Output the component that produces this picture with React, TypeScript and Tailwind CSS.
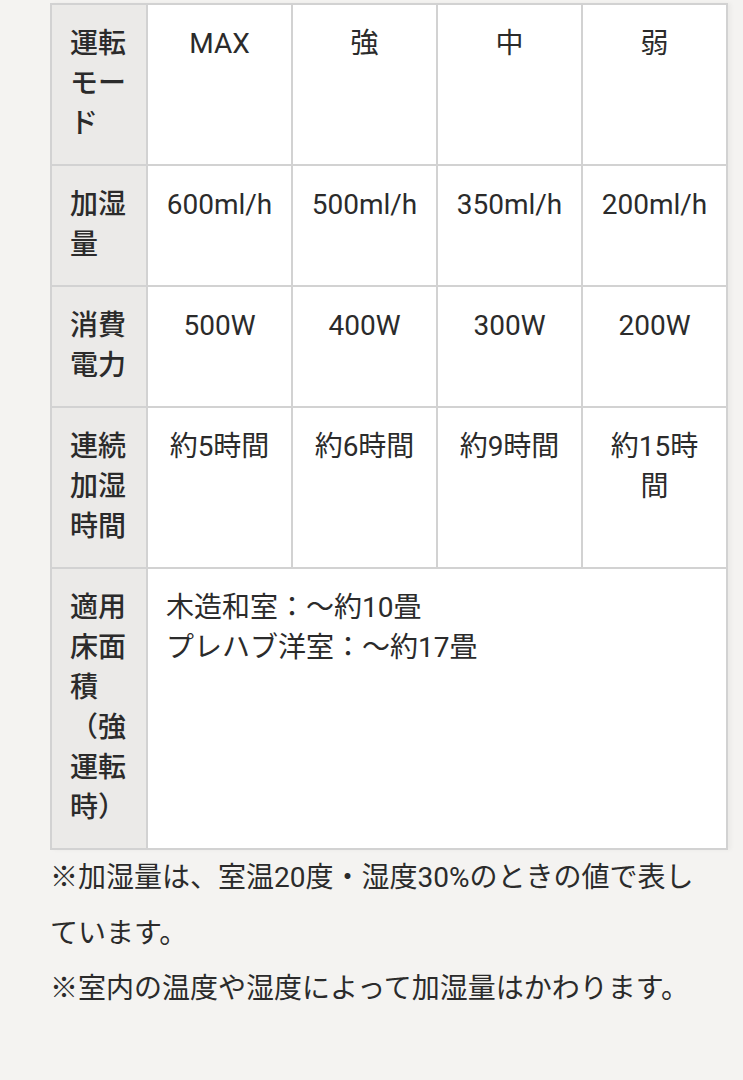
const rows: { label: string; values: string[] }[] = [
  { label: "運転モード", values: ["MAX", "強", "中", "弱"] },
  { label: "加湿量", values: ["600ml/h", "500ml/h", "350ml/h", "200ml/h"] },
  { label: "消費電力", values: ["500W", "400W", "300W", "200W"] },
  { label: "連続加湿時間", values: ["約5時間", "約6時間", "約9時間", "約15時間"] },
];

export default function App() {
  return (
    <div className="min-h-screen bg-[#f4f3f1] pt-[3px] pl-[50px] font-['Roboto','Noto_Sans_CJK_JP',sans-serif] text-[28px] leading-[40px] text-[#2b2b2b]">
      {/* スペック表 */}
      <div className="grid w-[678px] grid-cols-[94px_143px_143px_143px_143px] gap-[2px] bg-[#d2d2d2] p-[2px] shadow-[3px_0_4px_rgba(0,0,0,0.04)]">
        {rows.map((row) => (
          <>
            <div key={row.label} className="bg-[#ebeae8] px-[18px] pt-[19px] pb-5 font-medium">
              {row.label}
            </div>
            {row.values.map((v, i) => (
              <div key={row.label + i} className="bg-white px-[18px] pt-[19px] pb-5 text-center">
                {v}
              </div>
            ))}
          </>
        ))}
        <div className="bg-[#ebeae8] px-[18px] pt-[19px] pb-5 font-medium">
          適用床面積（強運転時）
        </div>
        <div className="col-span-4 bg-white px-[18px] pt-[19px] pb-5">
          <p>木造和室：～約10畳</p>
          <p>プレハブ洋室：～約17畳</p>
        </div>
      </div>

      {/* 注記 */}
      <div className="w-[660px] leading-[55.5px]">
        <p>※加湿量は、室温20度・湿度30%のときの値で表しています。</p>
        <p>※室内の温度や湿度によって加湿量はかわります。</p>
      </div>
    </div>
  );
}
